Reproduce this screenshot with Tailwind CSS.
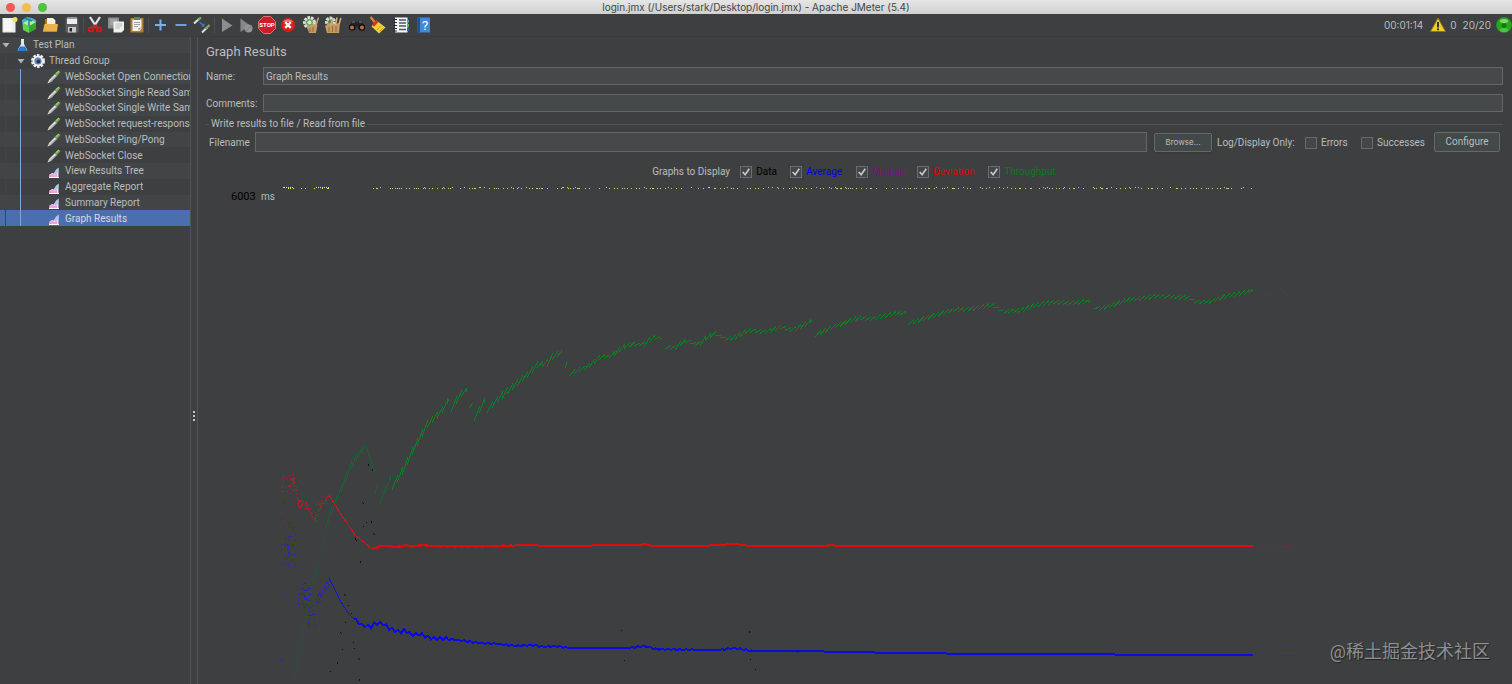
<!DOCTYPE html>
<html lang="en">
<head>
    <meta charset="UTF-8">
    <meta name="viewport" content="width=device-width, initial-scale=1.0">
    <title>login.jmx - Apache JMeter (5.4)</title>
    <script src="https://cdn.jsdelivr.net/npm/@tailwindcss/browser@4"></script>
</head>
<body class="h-screen flex flex-col overflow-hidden bg-[#3d3f41] text-[#bbbdbe] text-[10px] leading-4 font-['Roboto','Noto_Sans_CJK_SC',sans-serif]">

    <!-- Shared icons -->
    <svg class="hidden">
        <symbol id="pipette" viewBox="0 0 14 14">
            <path d="M0.500 13.500L2 10L8 4L10 6L4 12Z" fill="#d9dcda"/>
            <path d="M2 12.500L9.500 5.800" stroke="#8d9290" stroke-width="0.800"/>
            <path d="M7.500 4L11.500 0.500L13.500 2L10 6.200Z" fill="#79a352"/>
            <path d="M9 3.500L12 1.200" stroke="#b4d48e" stroke-width="1"/>
        </symbol>
        <symbol id="chart" viewBox="0 0 12 12">
            <path d="M1.500 11V8.500L4 7L6 7.500L8 4L10.500 2V11Z" fill="#f4dcf2"/>
            <path d="M5.500 7.500L8 4L10.500 1.500V6L7.500 8.500Z" fill="#a8c8ec"/>
            <path d="M1.500 11V9L4 7.500L6.500 9L9 7.500V11Z" fill="#f3a0dd"/>
            <path d="M1 11.500H11" stroke="#fff" stroke-width="1"/>
        </symbol>
        <symbol id="down" viewBox="0 0 8 8"><path d="M0.500 2H7.500L4 6.500Z" fill="#b0b3b5"/></symbol>
        <symbol id="tick" viewBox="0 0 11 11"><path d="M2.500 5.500L4.700 8L8.500 2.500" fill="none" stroke="#c8cacb" stroke-width="1.500"/></symbol>
    </svg>

    <!-- Title bar -->
    <header class="relative h-[14px] shrink-0 flex items-center bg-linear-to-b from-[#e6e6e6] to-[#d0d0d0] text-[#454545]">
        <div class="absolute left-[6px] flex gap-[7px]">
            <button aria-label="Close" class="size-[9px] rounded-full bg-[#ee5c54]"></button>
            <button aria-label="Minimize" class="size-[9px] rounded-full bg-[#f5bd4f]"></button>
            <button aria-label="Zoom" class="size-[9px] rounded-full bg-[#51c140]"></button>
        </div>
        <h1 class="w-full text-center font-['Inter',sans-serif]">login.jmx (/Users/stark/Desktop/login.jmx) - Apache JMeter (5.4)</h1>
    </header>

    <!-- Toolbar -->
    <div class="h-[23px] shrink-0 flex items-center justify-between border-b border-[#393b3d]">
        <div class="flex items-center">
            <div class="flex gap-[3px]">
                <button aria-label="New"><svg class="size-[18px]" viewBox="0 0 18 18"><path d="M2.500 2H15.500V16.500H2.500Z" fill="#eeeeec"/><path d="M4 4H12V15H4Z" fill="#f8f8f6"/><circle cx="15" cy="3.500" r="2.500" fill="#eee36a"/></svg></button>
                <button aria-label="Templates"><svg class="size-[18px]" viewBox="0 0 18 18"><path d="M1 4L6 1L11 2L15 4V12L8 16L2 13Z" fill="#49b4c4"/><path d="M2 7L8 10V17L2 14Z" fill="#5fd44a"/><path d="M8 10L15 6V13L8 17Z" fill="#36a82c"/><path d="M2 7L8 4L15 6L8 10Z" fill="#b9ee9d"/><path d="M8 4V10M4 2L11 5" stroke="#1e7fa2" stroke-width="1.500"/></svg></button>
                <button aria-label="Open"><svg class="size-[18px]" viewBox="0 0 18 18"><path d="M3 7V3H7L8 4H14V9H3Z" fill="#b67814"/><path d="M5 2H11L13 4V9H5Z" fill="#f4f0e2"/><path d="M1 15L2.500 8H16L15 15Z" fill="#e9b44b"/><path d="M1 15.500H15" stroke="#c98a1b"/></svg></button>
                <button aria-label="Save"><svg class="size-[18px]" viewBox="0 0 18 18"><path d="M2.500 2H14.500L15.500 3V16.500H2.500Z" fill="#5b5f62"/><path d="M4 1.500H14V8H4Z" fill="#eceded"/><path d="M4 2.500H14" stroke="#999"/><path d="M5 11H13V16.500H5Z" fill="#c9cccd"/><path d="M6.500 12H9V15.500H6.500Z" fill="#25282a"/></svg></button>
            </div>
            <div class="w-px h-4 mx-[2px] bg-[#4d5052]"></div>
            <div class="flex gap-[3px]">
                <button aria-label="Cut"><svg class="size-[18px]" viewBox="0 0 18 18"><path d="M4 1L10.500 11M14 1L7.500 11" stroke="#e4e6e8" stroke-width="2.200"/><path d="M9 9L7 11.500M9 9L11 11.500" stroke="#d51919" stroke-width="2.200"/><ellipse cx="5" cy="13.500" rx="2.300" ry="2" fill="none" stroke="#d51919" stroke-width="1.800"/><ellipse cx="13" cy="13.500" rx="2.300" ry="2" fill="none" stroke="#d51919" stroke-width="1.800"/></svg></button>
                <button aria-label="Copy"><svg class="size-[18px]" viewBox="0 0 18 18"><path d="M1 1.500H12V12.500H1Z" fill="#8c8f90"/><path d="M3 4H10M3 6H10M3 8H10" stroke="#b5b7b8"/><path d="M6.500 5.500H17V14L14.500 16.500H6.500Z" fill="#f0f0ee"/><path d="M8.500 8H15M8.500 10H15M8.500 12H13" stroke="#b8b8b6"/></svg></button>
                <button aria-label="Paste"><svg class="size-[18px]" viewBox="0 0 18 18"><path d="M2.500 2H15.500V16.500H2.500Z" fill="#b47f2c"/><path d="M4.500 3.500H13.500V12.500L11.500 15H4.500Z" fill="#f1f0ec"/><path d="M6 1H12V4H6Z" fill="#74777a"/><path d="M6 6.500H12M6 8.500H12M6 10.500H10" stroke="#a2a2a0"/><path d="M13.500 11.500L10.500 14.500V12Z" fill="#999"/></svg></button>
            </div>
            <div class="w-px h-4 mx-[2px] bg-[#4d5052]"></div>
            <div class="flex gap-[3px]">
                <button aria-label="Expand All"><svg class="size-[18px]" viewBox="0 0 18 18"><path d="M9.500 3.500V14.500M4 9H15" stroke="#7fb0ee" stroke-width="2"/></svg></button>
                <button aria-label="Collapse All"><svg class="size-[18px]" viewBox="0 0 18 18"><path d="M3.500 9H14.500" stroke="#6b9fe2" stroke-width="2"/></svg></button>
                <button aria-label="Toggle"><svg class="size-[18px]" viewBox="0 0 18 18"><path d="M1 7.500L6.500 2.500M9 16.500L14 11.500" stroke="#dfe3df" stroke-width="2"/><path d="M5 4L8 1.500M12.500 13L16.500 9" stroke="#83ad5a" stroke-width="2.200"/><path d="M6.500 6L11 10" stroke="#3a78cf" stroke-width="1.500"/><path d="M8 10.500L11.500 10.500L11.500 7Z" fill="#3a78cf"/></svg></button>
            </div>
            <div class="w-px h-4 mx-[3px] bg-[#4d5052]"></div>
            <div class="flex gap-[2px]">
                <button aria-label="Start"><svg class="size-[18px]" viewBox="0 0 18 18"><path d="M4 2.500L14.500 9.500L4 16Z" fill="#8b8e90"/></svg></button>
                <button aria-label="Start no pauses"><svg class="size-[18px]" viewBox="0 0 18 18"><path d="M2.500 2.500L12 9.500L2.500 16Z" fill="#85888a"/><circle cx="10.500" cy="12.500" r="4" fill="#929597"/><path d="M8 15L13 10" stroke="#777a7c"/></svg></button>
                <button aria-label="Stop"><svg class="size-[18px]" viewBox="0 0 18 18"><path d="M5.500 0.500H12.500L17.500 5.500V12.500L12.500 17.500H5.500L0.500 12.500V5.500Z" fill="#d01b28" stroke="#e9868c" stroke-width="0.800"/><text x="9" y="11.200" text-anchor="middle" font-size="6" font-weight="700" fill="#fff">STOP</text></svg></button>
                <button aria-label="Shutdown"><svg class="size-[18px]" viewBox="0 0 18 18"><circle cx="10" cy="9" r="7" fill="#d8201b"/><path d="M5 6A6 6 0 0 1 15 6" fill="#ee7167"/><path d="M7.200 6.200L12.800 11.800M12.800 6.200L7.200 11.800" stroke="#fff" stroke-width="2.400"/></svg></button>
            </div>
            <div class="flex gap-1 ml-[6px]">
                <button aria-label="Clear"><svg class="size-[18px]" viewBox="0 0 18 18"><circle cx="7.500" cy="6.500" r="5" fill="#6da35a" stroke="#dadcda" stroke-width="3" stroke-dasharray="2.500 1"/><circle cx="7.500" cy="6.500" r="2" fill="#cfe4c4"/><path d="M5 11L13 8L15.500 9L14 17H7Z" fill="#c69a62"/><path d="M14 9L16.500 1.500" stroke="#cba57a" stroke-width="1.500"/><path d="M8 12V16M11 11V16" stroke="#8e6a3c"/></svg></button>
                <button aria-label="Clear All"><svg class="size-[18px]" viewBox="0 0 18 18"><circle cx="6.500" cy="6" r="4" fill="#5e8e50" stroke="#dadcda" stroke-width="3" stroke-dasharray="2.500 1"/><path d="M1 10L6 7L11 8L16 7L15 17H3Z" fill="#c69a62"/><path d="M7 9L9 2M11.500 9L13 1.500M15 8L17 2" stroke="#d4b186" stroke-width="1.500"/><path d="M5 11V16M8.500 10V16M12 10V16" stroke="#8e6a3c"/></svg></button>
            </div>
            <div class="flex gap-[2px] ml-[6px]">
                <button aria-label="Search"><svg class="size-[18px]" viewBox="0 0 18 18"><path d="M1 11L4 5H7.500L9 7L10.500 5H14L17 11L15 14H11L9 10L7 14H3Z" fill="#222426"/><circle cx="4" cy="11.500" r="2.600" fill="#b9734b" stroke="#111" stroke-width="1.200"/><circle cx="14" cy="11.500" r="2.600" fill="#b9734b" stroke="#111" stroke-width="1.200"/><path d="M4 6H7M11 6H14" stroke="#7e8486"/></svg></button>
                <button aria-label="Reset Search"><svg class="size-[18px]" viewBox="0 0 18 18"><path d="M2.500 1L7 6.500" stroke="#e0852c" stroke-width="2.200"/><path d="M8.500 4.500L17.500 11.500L11 17.500L3.500 10.500Z" fill="#f3cf3a"/><path d="M4 8.500L8.500 4L10.500 6L6 10.800Z" fill="#d3342a"/><path d="M9 14L13 10M11.500 15.500L15.500 11.500" stroke="#cf9f1e"/></svg></button>
            </div>
            <div class="flex gap-[5px] ml-[6px]">
                <button aria-label="Function Helper"><svg class="size-[18px]" viewBox="0 0 18 18"><path d="M3 1.500H15.500V16.500H3Z" fill="#f4f5f7"/><path d="M15 4H17V6.500H15Z" fill="#35a7df"/><path d="M15 8H17V11H15Z" fill="#57b94c"/><path d="M15 12H17V15H15Z" fill="#3166c8"/><path d="M7 4H14M7 7H14M7 10H14M7 13.500H14" stroke="#4d5560" stroke-width="1.300"/><path d="M1.500 3.500H5M1.500 6.500H5M1.500 9.500H5M1.500 12.500H5M1.500 15H5" stroke="#26282a"/></svg></button>
                <button aria-label="Help"><svg class="size-[18px]" viewBox="0 0 18 18"><path d="M2.500 1.500H15V16.500H2.500Z" fill="#4287d8"/><path d="M2.500 1.500H5V16.500H2.500Z" fill="#1f4f94"/><text x="10" y="14" text-anchor="middle" font-size="13" fill="#fff">?</text></svg></button>
            </div>
        </div>
        <div class="flex items-center font-['Inter',sans-serif]">
            <span>00:01:14</span>
            <svg class="size-4 ml-[7px]" viewBox="0 0 16 16"><path d="M8 1L15.500 14.500H0.500Z" fill="#f2cc2e" stroke="#8c7411"/><path d="M8 5V10.500M8 11.500V13.300" stroke="#222" stroke-width="1.800"/></svg>
            <span class="ml-1">0</span>
            <span class="ml-[6px]">20/20</span>
            <svg class="size-4 ml-[5px]" viewBox="0 0 16 16"><circle cx="8" cy="8" r="7.800" fill="#28a81f"/><ellipse cx="8" cy="4" rx="4" ry="2" fill="#7bd870"/><circle cx="8" cy="8.500" r="2.500" fill="#147a10"/><ellipse cx="8" cy="13" rx="4" ry="2" fill="#4cc740"/></svg>
        </div>
    </div>

    <div class="flex flex-1 min-h-0">
        <!-- Test plan tree -->
        <nav class="w-[190px] shrink-0 overflow-hidden">
            <ul class="relative grid grid-rows-12 h-[189px] whitespace-nowrap *:flex *:items-center *:min-h-0 *:pt-px *:odd:bg-[#414547]">
                <li class="pl-[2px]"><svg class="size-2"><use href="#down"/></svg><svg class="size-[14px] ml-[6px] mr-[3px]" viewBox="0 0 14 14"><path d="M5 1H8V6L11.500 12.500H1.500L5 6Z" fill="#dce7f2"/><path d="M4 8.500H9L11.500 13H1.500Z" fill="#2c79d0"/><path d="M5 1.500H8" stroke="#fff"/></svg>Test Plan</li>
                <li class="pl-[17px]"><svg class="size-2"><use href="#down"/></svg><svg class="size-[14px] ml-[6px] mr-1" viewBox="0 0 14 14"><circle cx="7" cy="7" r="5.800" fill="none" stroke="#eceef0" stroke-width="2.400" stroke-dasharray="2.500 1.150"/><circle cx="7" cy="7" r="4.500" fill="#5c83b8" stroke="#f0f2f4" stroke-width="1.800"/><circle cx="7.500" cy="7.500" r="1.800" fill="#22344f"/></svg>Thread Group</li>
                <li class="pl-[47px]"><svg class="size-[14px] mr-1 shrink-0"><use href="#pipette"/></svg>WebSocket Open Connection</li>
                <li class="pl-[47px]"><svg class="size-[14px] mr-1 shrink-0"><use href="#pipette"/></svg>WebSocket Single Read Sampler</li>
                <li class="pl-[47px]"><svg class="size-[14px] mr-1 shrink-0"><use href="#pipette"/></svg>WebSocket Single Write Sampler</li>
                <li class="pl-[47px]"><svg class="size-[14px] mr-1 shrink-0"><use href="#pipette"/></svg>WebSocket request-response Sampler</li>
                <li class="pl-[47px]"><svg class="size-[14px] mr-1 shrink-0"><use href="#pipette"/></svg>WebSocket Ping/Pong</li>
                <li class="pl-[47px]"><svg class="size-[14px] mr-1 shrink-0"><use href="#pipette"/></svg>WebSocket Close</li>
                <li class="pl-12"><svg class="size-3 mr-[5px] mt-px"><use href="#chart"/></svg>View Results Tree</li>
                <li class="pl-12"><svg class="size-3 mr-[5px] mt-px"><use href="#chart"/></svg>Aggregate Report</li>
                <li class="pl-12"><svg class="size-3 mr-[5px] mt-px"><use href="#chart"/></svg>Summary Report</li>
                <li class="pl-12 bg-[#4b6eaf] text-[#d5dae3]"><svg class="size-3 mr-[5px] mt-px"><use href="#chart"/></svg>Graph Results</li>
                <li class="absolute left-[5px] top-4 bottom-0 w-px bg-[#55585a]" aria-hidden="true"></li>
                <li class="absolute left-5 top-8 bottom-0 border-l border-[#7aa6e2]" aria-hidden="true"></li>
            </ul>
        </nav>

        <!-- Splitter -->
        <div class="w-2 shrink-0 border-x border-[#515456] flex flex-col items-center justify-center gap-[2px] pt-[110px]">
            <span class="size-[2px] bg-[#c4c6c7]"></span>
            <span class="size-[2px] bg-[#c4c6c7]"></span>
            <span class="size-[2px] bg-[#c4c6c7]"></span>
        </div>

        <!-- Graph Results panel -->
        <main class="relative flex-1 min-w-0 flex flex-col">
            <form class="pl-2 pr-[9px] pt-[6px]">
                <h2 class="text-[13px] leading-[18px]">Graph Results</h2>
                <div class="flex items-center mt-[6px]">
                    <label for="name" class="w-[57px] pt-px">Name:</label>
                    <input id="name" type="text" value="Graph Results" class="flex-1 h-[18px] px-[2px] bg-[#45494a] border border-[#646667]">
                </div>
                <div class="flex items-center mt-[9px]">
                    <label for="comments" class="w-[57px] pt-px">Comments:</label>
                    <input id="comments" type="text" class="flex-1 h-[18px] px-[2px] bg-[#45494a] border border-[#646667]">
                </div>
                <fieldset class="mt-1 px-[3px] min-w-0 border-t border-[#515456]">
                    <legend class="px-[2px]">Write results to file / Read from file</legend>
                    <div class="flex items-center whitespace-nowrap">
                        <label for="filename" class="w-[46px] pt-px">Filename</label>
                        <input id="filename" type="text" class="flex-1 min-w-0 h-5 px-[2px] bg-[#45494a] border border-[#646667]">
                        <button type="button" class="w-[58px] h-[19px] ml-[7px] text-[8px] leading-4 font-['Inter',sans-serif] bg-[#434849] border border-[#66696a] rounded-xs shadow-sm">Browse...</button>
                        <span class="ml-[5px] w-[88px] pt-px">Log/Display Only:</span>
                        <label class="flex items-center gap-1 w-[56px] pt-px"><input type="checkbox" class="appearance-none size-3 bg-[#43474a] border border-[#696c6e]">Errors</label>
                        <label class="flex items-center gap-1 w-[73px] pt-px"><input type="checkbox" class="appearance-none size-3 bg-[#43474a] border border-[#696c6e]">Successes</label>
                        <button type="button" class="w-[66px] h-5 bg-[#434849] border border-[#66696a] rounded-xs">Configure</button>
                    </div>
                </fieldset>
            </form>

            <div class="flex items-center justify-center mt-3 pr-[2px] whitespace-nowrap">
                <span class="w-[88px]">Graphs to Display</span>
                <label class="flex items-center gap-1 w-[50px] text-black"><span class="grid *:col-start-1 *:row-start-1"><input type="checkbox" checked class="appearance-none size-3 bg-[#43474a] border border-[#696c6e]"><svg class="size-3 pointer-events-none"><use href="#tick"/></svg></span>Data</label>
                <label class="flex items-center gap-1 w-[66px] text-[#0000f0]"><span class="grid *:col-start-1 *:row-start-1"><input type="checkbox" checked class="appearance-none size-3 bg-[#43474a] border border-[#696c6e]"><svg class="size-3 pointer-events-none"><use href="#tick"/></svg></span>Average</label>
                <label class="flex items-center gap-1 w-[61px] text-[#80107f]"><span class="grid *:col-start-1 *:row-start-1"><input type="checkbox" checked class="appearance-none size-3 bg-[#43474a] border border-[#696c6e]"><svg class="size-3 pointer-events-none"><use href="#tick"/></svg></span>Median</label>
                <label class="flex items-center gap-1 w-[71px] text-[#d80808]"><span class="grid *:col-start-1 *:row-start-1"><input type="checkbox" checked class="appearance-none size-3 bg-[#43474a] border border-[#696c6e]"><svg class="size-3 pointer-events-none"><use href="#tick"/></svg></span>Deviation</label>
                <label class="flex items-center gap-1 text-[#0b7a22]"><span class="grid *:col-start-1 *:row-start-1"><input type="checkbox" checked class="appearance-none size-3 bg-[#43474a] border border-[#696c6e]"><svg class="size-3 pointer-events-none"><use href="#tick"/></svg></span>Throughput</label>
            </div>

            <svg id="graph" class="flex-1 min-h-0 w-full" viewBox="198 180 1314 504" preserveAspectRatio="xMinYMin slice" shape-rendering="crispEdges">
                <text x="231" y="200" font-size="11" fill="#000">6003</text>
                <text x="261" y="200" font-size="10" fill="#bbbdbe">ms</text>
            </svg>

            <p class="absolute right-[22px] bottom-[18px] text-lg leading-7 text-[#8d8f90] [text-shadow:1px_1px_1px_#222]">@稀土掘金技术社区</p>
        </main>
    </div>

    <script>
        const graph = document.getElementById('graph');

        let seed = 7;
        function rand() {
            seed = (seed * 16807) % 2147483647;
            return seed / 2147483647;
        }

        function addPath(d, color, width) {
            const path = document.createElementNS('http://www.w3.org/2000/svg', 'path');
            path.setAttribute('d', d);
            path.setAttribute('fill', 'none');
            path.setAttribute('stroke', color);
            path.setAttribute('stroke-width', width);
            graph.appendChild(path);
        }

        function dots(points, color) {
            addPath(points.map(([x, y]) => `M${Math.round(x)} ${Math.round(y)}.5h1`).join(''), color, 1);
        }

        function valueAt(points, x) {
            for (let i = 1; i < points.length; i++) {
                const [x0, y0] = points[i - 1];
                const [x1, y1] = points[i];
                if (x <= x1) return y0 + (y1 - y0) * (x - x0) / (x1 - x0);
            }
            return points[points.length - 1][1];
        }

        // Samples above the top of the scale
        const peaks = [];
        for (let x = 283; x < 1248; x += 1 + Math.floor(rand() * 5)) {
            if ((x > 294 && x < 300) || (x > 307 && x < 313) || (x > 330 && x < 373)) continue;
            if (x > 373 && rand() < 0.08) x += 5;
            peaks.push([x, 187 + (rand() < 0.2 ? 0 : 1)]);
        }
        for (let x = 284; x < 330; x += 2) {
            if (x < 293 || x > 315) peaks.push([x, 187]);
        }
        dots(peaks, '#c9c987');
        dots(peaks.filter((p, i) => i % 6 === 0 || p[0] < 330), '#e8e84a');

        // Throughput
        const start = [[293, 682], [299, 650], [305, 620], [310, 593], [316, 568], [322, 547], [330, 513]];
        for (let i = 1; i < start.length; i++) {
            const [x0, y0] = start[i - 1], [x1, y1] = start[i];
            for (let y = y0; y > y1; y -= 2) dots([[x0 + (x1 - x0) * (y - y0) / (y1 - y0) + (rand() - 0.5) * (y < 535 ? 4 : 1), y]], '#1d5a33');
        }
        const runs = [
            [[326, 525], [334, 505], [342, 487], [350, 467], [358, 455], [365, 447]],
            [[366, 446], [370, 458], [375, 472]],
            [[375, 492], [378, 485]],
            [[380, 501], [386, 489], [391, 477]],
            [[392, 487], [403, 470], [413, 450], [428, 423], [440, 413], [449, 400]],
            [[451, 409], [460, 394], [467, 391]],
            [[469, 406], [473, 405]],
            [[474, 418], [485, 401]],
            [[487, 410], [500, 397], [527, 375], [540, 362], [545, 366], [553, 356], [562, 353]],
            [[565, 367], [567, 363]],
            [[569, 374], [587, 367], [600, 357], [612, 356], [622, 347], [638, 343], [642, 347], [652, 337], [662, 339]],
            [[665, 347], [675, 348], [683, 341], [692, 342], [698, 346], [708, 336], [718, 333], [722, 339], [735, 338], [747, 330], [767, 332], [780, 327], [793, 330], [802, 326], [812, 321]],
            [[815, 335], [833, 327], [858, 318], [873, 319], [882, 316], [900, 313], [907, 313]],
            [[908, 323], [930, 317], [952, 310], [970, 309], [993, 305], [1003, 312], [1023, 310], [1035, 305], [1053, 302], [1072, 303], [1091, 301]],
            [[1094, 307], [1099, 309], [1113, 305], [1127, 300], [1160, 296], [1190, 298], [1195, 302], [1208, 302], [1227, 296], [1253, 291]]
        ];
        runs.forEach(run => {
            const first = run[0][0];
            const end = run[run.length - 1][0];
            const lift = first < 565 ? 3 : 2;
            let d = '';
            for (let x = first; x < end; x += 5) {
                const last = Math.min(x + 6, end);
                const rise = first === 366 ? 0 : lift * (last - x) / 6;
                d += `M${x} ${(valueAt(run, x) + rise).toFixed(1)}L${last} ${(valueAt(run, last) - rise).toFixed(1)}`;
            }
            addPath(d, first < 392 ? '#1b6232' : '#0b8022', 1);
        });
        dots([[1264, 294], [1269, 294], [1281, 290], [1284, 292], [1287, 295]], '#235c35');

        // Deviation
        const red = [[329, 495], [342, 516], [355, 535], [365, 543], [372, 549], [381, 546], [400, 547], [406, 545], [412, 547], [419, 545], [430, 546], [500, 546], [530, 545], [545, 546], [640, 545], [645, 544], [653, 546], [700, 546], [735, 544], [750, 546], [825, 546], [830, 545], [840, 546], [1253, 546]];
        addPath('M' + red.filter(p => p[0] <= 372).map(p => p.join(' ')).join('L'), '#d81414', 1);
        addPath('M' + red.filter(p => p[0] >= 372).map(p => p.join(' ')).join('L'), '#e00c0c', 2);
        let wave = '';
        for (let x = 376; x < 520; x += 7) wave += `M${x} ${valueAt(red, x) - (rand() < 0.5 ? 1 : -1)}h3`;
        addPath(wave, '#b51d1d', 1);
        addPath('M291 478l2 3M293 477l1 8M298 499l1 8l2 2M304 501l-3 7M306 502l2 6l2 4l4 8M315 518l0 4M316 506l3-3M320 508l2-5l3 0l2-6l3 -1', '#b81c22', 1);
        const reds = [];
        for (let i = 0; i < 30; i++) reds.push([282 + rand() * 12, 474 + rand() * 20]);
        for (let i = 0; i < 55; i++) {
            const x = 293 + rand() * 30;
            reds.push([x, valueAt([[293, 482], [300, 504], [308, 505], [314, 518], [323, 501]], x) + rand() * 8 - 4]);
        }
        reds.push([281, 491], [281, 512], [284, 520], [283, 530], [283, 546], [1261, 546], [1268, 546], [1276, 547], [1281, 546], [1286, 546], [1291, 547]);
        dots(reds, '#a52229');

        // Average
        const blue = [[329, 578], [335, 590], [341, 602], [348, 613], [354, 619], [362, 625], [371, 627], [375, 623], [383, 624], [390, 629], [401, 632], [405, 630], [412, 635], [420, 634], [430, 638], [450, 639], [480, 643], [500, 644], [515, 646], [532, 645], [545, 647], [555, 646], [570, 648], [630, 648], [645, 646], [655, 649], [700, 650], [720, 650], [735, 648], [752, 651], [800, 651], [900, 653], [1000, 654], [1253, 655]];
        addPath('M' + blue.filter(p => p[0] <= 354).map(p => p.join(' ')).join('L'), '#1414cc', 1);
        let d = 'M354 619';
        for (let x = 356; x <= 1253; x += 3) {
            const saw = x < 450 ? 1.5 : x < 800 ? 0.6 : 0;
            d += `L${x} ${(valueAt(blue, x) + (x % 2 ? saw : -saw)).toFixed(1)}`;
        }
        addPath(d, '#0b0be0', 2);
        const blues = [[281, 563], [285, 592], [282, 612], [283, 641], [283, 660], [280, 660], [283, 502], [285, 502], [281, 518], [281, 582], [281, 630], [1261, 655], [1266, 655], [1277, 655], [1281, 655], [1284, 655], [1288, 655], [1292, 655]];
        for (let i = 0; i < 55; i++) blues.push([284 + rand() * 11, 521 + rand() * 46]);
        for (let i = 0; i < 60; i++) blues.push([297 + rand() * 13, 583 + rand() * 25]);
        for (let i = 0; i < 25; i++) blues.push([308 + rand() * 7, 605 + rand() * 23]);
        for (let i = 0; i < 60; i++) {
            const x = 316 + rand() * 13;
            blues.push([x, 601 - (x - 316) * 1.7 + rand() * 10 - 4]);
        }
        dots(blues, '#2424b8');

        // Data
        const data = [[368, 464], [368, 465], [372, 469], [372, 470], [362, 502], [363, 503], [366, 522], [371, 521], [371, 522], [363, 526], [373, 533], [374, 534], [355, 538], [355, 539], [356, 540], [360, 561], [360, 562], [344, 594], [345, 595], [348, 605], [351, 613], [345, 622], [340, 632], [341, 633], [353, 642], [354, 648], [342, 649], [337, 662], [337, 663], [358, 658], [359, 659], [330, 671], [359, 679], [359, 680], [621, 630], [624, 660], [749, 631], [749, 632], [750, 659], [755, 669]];
        dots(data, '#101010');
    </script>
</body>
</html>
